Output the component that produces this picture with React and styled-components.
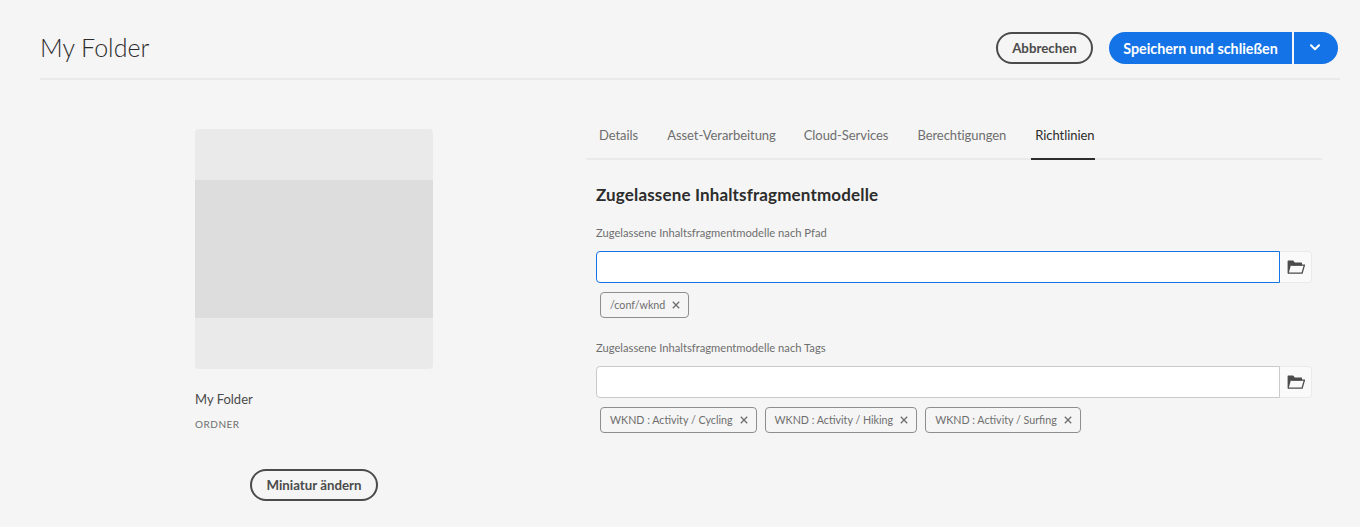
import styled, { createGlobalStyle } from "styled-components";

const GlobalStyle = createGlobalStyle`
  html, body {
    margin: 0;
    background: #f5f5f5;
    font-family: "Lato", "Open Sans", sans-serif;
    color: #4b4b4b;
  }
`;

const Page = styled.div`
  width: 1360px;
  height: 527px;
  overflow: hidden;
  background: #f5f5f5;
`;

const Header = styled.header`
  display: flex;
  align-items: center;
  justify-content: space-between;
  box-sizing: border-box;
  height: 80px;
  margin: 0 20px 0 40px;
  padding: 18px 2px 0 0;
  border-bottom: 2px solid #eaeaea;
`;

const Title = styled.h1`
  margin: 0;
  padding-bottom: 2px;
  font-size: 25px;
  font-weight: 300;
  color: #2c2c2c;
`;

const Actions = styled.div`
  display: flex;
  align-items: center;
  gap: 16px;
`;

const OutlineButton = styled.button`
  box-sizing: border-box;
  height: 32px;
  width: ${(props) => props.$width}px;
  padding: 0;
  border: 2px solid #4b4b4b;
  border-radius: 16px;
  background: transparent;
  color: #4b4b4b;
  font: 700 13.3px "Lato", sans-serif;
`;

const SplitButton = styled.div`
  display: flex;
  gap: 2px;
`;

const PrimaryButton = styled.button`
  height: 32px;
  width: 183px;
  padding: 0;
  border: 0;
  border-radius: 16px 0 0 16px;
  background: #1473e6;
  color: #fff;
  font: 700 14.3px "Lato", sans-serif;
`;

const CaretButton = styled.button`
  display: flex;
  align-items: center;
  justify-content: center;
  height: 32px;
  width: 44px;
  padding: 0 2px 2px 0;
  border: 0;
  border-radius: 0 16px 16px 0;
  background: #1473e6;
  color: #fff;
`;

const Main = styled.main`
  display: flex;
  padding-top: 37px;
`;

const Aside = styled.aside`
  display: flex;
  flex-direction: column;
  box-sizing: border-box;
  width: 586px;
  padding-left: 195px;
`;

const Thumbnail = styled.div`
  display: flex;
  align-items: center;
  width: 238px;
  height: 240px;
  margin-top: 12px;
  border-radius: 4px;
  background: #eaeaea;
`;

const ThumbnailFill = styled.div`
  width: 100%;
  height: 138px;
  background: #dddddd;
`;

const AssetName = styled.div`
  margin-top: 22px;
  font-size: 13px;
  line-height: 16px;
  color: #4b4b4b;
`;

const AssetType = styled.div`
  margin-top: 11px;
  font-size: 10px;
  line-height: 12px;
  letter-spacing: 0.5px;
  color: #6e6e6e;
`;

const ThumbnailAction = styled.div`
  display: flex;
  justify-content: center;
  width: 238px;
  margin-top: 39px;
`;

const Panel = styled.section`
  width: 736px;
`;

const Tabs = styled.nav`
  display: flex;
  height: 41px;
  border-bottom: 2px solid #eaeaea;
`;

const Tab = styled.div`
  position: relative;
  box-sizing: border-box;
  height: 43px;
  margin-left: ${(props) => props.$left}px;
  padding: ${(props) => (props.$active ? "0 0 0 4px" : "0 4px")};
  font-size: 13px;
  letter-spacing: -0.06px;
  line-height: 36px;
  color: ${(props) => (props.$active ? "#2c2c2c" : "#6e6e6e")};

  &::after {
    content: "";
    display: ${(props) => (props.$active ? "block" : "none")};
    position: absolute;
    left: 0;
    right: 0;
    bottom: 0;
    height: 2px;
    background: #2c2c2c;
  }
`;

const Form = styled.div`
  padding: 24px 10px 0;
`;

const Heading = styled.h2`
  margin: 0 0 19px;
  font-size: 17px;
  line-height: 22px;
  letter-spacing: 0.15px;
  font-weight: 700;
  color: #2c2c2c;
`;

const Field = styled.div`
  margin-bottom: 22px;
`;

const Label = styled.label`
  display: block;
  margin-bottom: 10px;
  font-size: 11.2px;
  line-height: 16px;
  color: #6e6e6e;
`;

const InputRow = styled.div`
  display: flex;
  height: 32px;
`;

const TextInput = styled.input`
  flex: 1;
  box-sizing: border-box;
  min-width: 0;
  height: 32px;
  padding: 0 8px;
  border: 1px solid ${(props) => (props.$focused ? "#1473e6" : "#cacaca")};
  border-radius: 4px 0 0 4px;
  background: #fff;
  outline: none;
`;

const BrowseButton = styled.button`
  display: flex;
  align-items: center;
  justify-content: center;
  box-sizing: border-box;
  width: 32px;
  height: 32px;
  padding: 0;
  border: 1px solid #eaeaea;
  border-left: 0;
  border-radius: 0 4px 4px 0;
  background: #fafafa;
`;

const TagList = styled.div`
  display: flex;
  gap: 8px;
  margin: 9px 0 0 4px;
`;

const Tag = styled.div`
  display: flex;
  align-items: center;
  box-sizing: border-box;
  height: 26px;
  padding: 0 7px 1px 9px;
  border: 1px solid #8e8e8e;
  border-radius: 4px;
  font-size: 10.7px;
  color: #6e6e6e;
  white-space: nowrap;
`;

const TagClose = styled.svg`
  width: 8px;
  height: 8px;
  margin-left: 7px;
  margin-top: 1px;
  margin-right: 1px;
  color: #6e6e6e;
`;

const Chevron = () => (
  <svg width="10" height="7" viewBox="0 0 10 7" fill="none" stroke="currentColor" strokeWidth="2" strokeLinecap="round" strokeLinejoin="round">
    <path d="M1 1.2l4 4 4-4" />
  </svg>
);

const FolderIcon = () => (
  <svg width="18" height="14" viewBox="0 0 18 14" fill="none">
    <path d="M.6 13.4V1.2C.6.8.8.6 1.2.6h5l1.6 1.8h6.6c.4 0 .6.2.6.6v2.4H3.8L1.6 13.4z" fill="#4b4b4b" />
    <path d="M4.2 5.2h13.2l-2.3 7.9H1" stroke="#4b4b4b" strokeWidth="1.3" />
  </svg>
);

const RemovableTag = ({ label }) => (
  <Tag>
    {label}
    <TagClose viewBox="0 0 8 8" fill="none" stroke="currentColor" strokeWidth="1.3">
      <path d="M.8.8l6.4 6.4M7.2.8L.8 7.2" />
    </TagClose>
  </Tag>
);

const PickerField = ({ label, focused, tags }) => (
  <Field>
    <Label>{label}</Label>
    <InputRow>
      <TextInput $focused={focused} />
      <BrowseButton>
        <FolderIcon />
      </BrowseButton>
    </InputRow>
    <TagList>
      {tags.map((tag) => (
        <RemovableTag key={tag} label={tag} />
      ))}
    </TagList>
  </Field>
);

const tabs = [
  { name: "Details", left: 9 },
  { name: "Asset-Verarbeitung", left: 21 },
  { name: "Cloud-Services", left: 20 },
  { name: "Berechtigungen", left: 21 },
  { name: "Richtlinien", left: 21, active: true },
];

const App = () => (
  <Page>
    <GlobalStyle />
    <Header>
      <Title>My Folder</Title>
      <Actions>
        <OutlineButton $width={97}>Abbrechen</OutlineButton>
        <SplitButton>
          <PrimaryButton>Speichern und schließen</PrimaryButton>
          <CaretButton>
            <Chevron />
          </CaretButton>
        </SplitButton>
      </Actions>
    </Header>
    <Main>
      <Aside>
        <Thumbnail>
          <ThumbnailFill />
        </Thumbnail>
        <AssetName>My Folder</AssetName>
        <AssetType>ORDNER</AssetType>
        <ThumbnailAction>
          <OutlineButton $width={128}>Miniatur ändern</OutlineButton>
        </ThumbnailAction>
      </Aside>
      <Panel>
        <Tabs>
          {tabs.map((tab) => (
            <Tab key={tab.name} $left={tab.left} $active={tab.active}>
              {tab.name}
            </Tab>
          ))}
        </Tabs>
        <Form>
          <Heading>Zugelassene Inhaltsfragmentmodelle</Heading>
          <PickerField label="Zugelassene Inhaltsfragmentmodelle nach Pfad" focused tags={["/conf/wknd"]} />
          <PickerField
            label="Zugelassene Inhaltsfragmentmodelle nach Tags"
            tags={["WKND : Activity / Cycling", "WKND : Activity / Hiking", "WKND : Activity / Surfing"]}
          />
        </Form>
      </Panel>
    </Main>
  </Page>
);

export default App;
